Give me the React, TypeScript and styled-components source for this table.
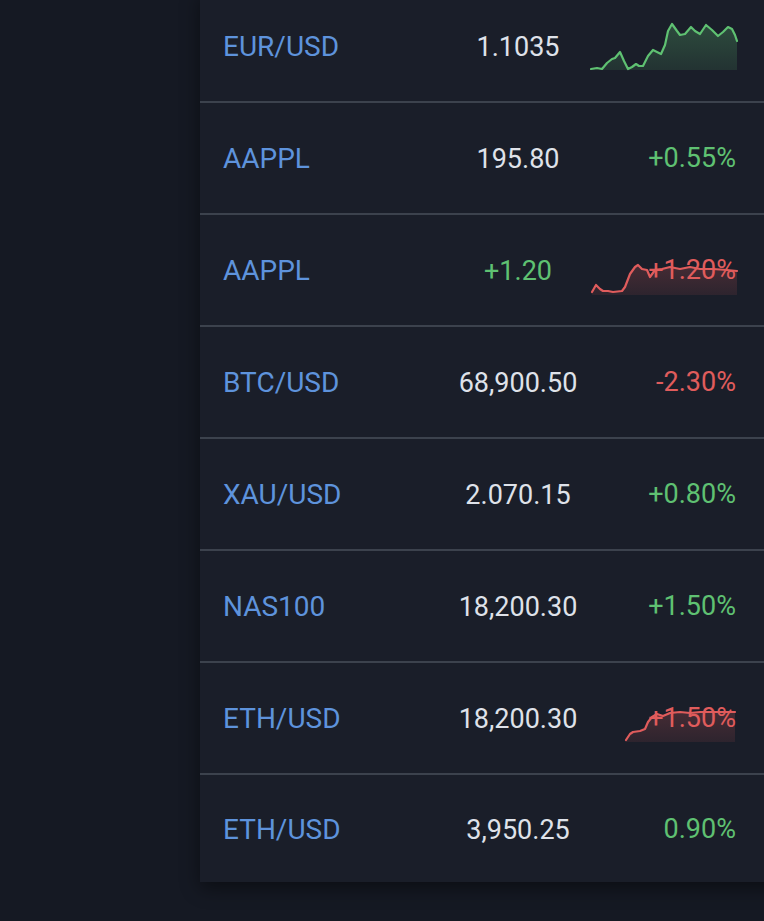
import React from "react";
import styled, { createGlobalStyle } from "styled-components";

const Global = createGlobalStyle`
  html, body { margin: 0; padding: 0; background: #151923; overflow: hidden; }
  body { font-family: Roboto, "Liberation Sans", sans-serif; }
`;

const Page = styled.div`
  width: 764px;
  height: 921px;
  overflow: hidden;
  background: #151923;
`;

const Panel = styled.div`
  margin: -9px 0 0 200px;
  width: 600px;
  background: #1a1e29;
  box-shadow: 0 6px 18px rgba(0, 0, 0, 0.45);
`;

const Row = styled.div<{ $last?: boolean }>`
  display: grid;
  grid-template-columns: 238px 160px 1fr;
  align-items: center;
  height: ${(p) => (p.$last ? 107 : 110)}px;
  border-bottom: ${(p) => (p.$last ? "none" : "2px solid #3c424d")};
  font-size: 27px;
  line-height: 34px;
`;

const Symbol = styled.div`
  padding-left: 23px;
  font-size: 28px;
  color: #5e93dc;
  transform: translateY(1px);
`;

const Price = styled.div<{ $tone?: "up" | "down" }>`
  text-align: center;
  color: ${(p) => (p.$tone === "up" ? "#5fc172" : p.$tone === "down" ? "#e05c5c" : "#dfe2e9")};
  transform: translateY(1px);
`;

const Change = styled.div<{ $tone: "up" | "down" }>`
  position: relative;
  justify-self: end;
  margin-right: 64px;
  height: 34px;
  min-width: 120px;
  text-align: right;
  color: ${(p) => (p.$tone === "up" ? "#5fc172" : "#e05c5c")};
`;

const ChangeText = styled.span`
  position: relative;
  z-index: 1;
`;

const Spark = styled.svg`
  position: absolute;
  right: -2px;
  top: -8px;
  width: 148px;
  height: 50px;
  overflow: visible;
`;

type Pt = [number, number];

const toPath = (pts: Pt[], ox: number, oy: number) =>
  pts.map((p, i) => `${i === 0 ? "M" : "L"}${p[0] - ox} ${p[1] - oy}`).join(" ");

const Sparkline: React.FC<{ pts: Pt[]; oy: number; base: number; color: string; id: string; fillOpacity: number }> = ({
  pts,
  oy,
  base,
  color,
  id,
  fillOpacity,
}) => {
  const ox = 590;
  const line = toPath(pts, ox, oy);
  const first = pts[0];
  const last = pts[pts.length - 1];
  const area = `${line} L${last[0] - ox} ${base - oy} L${first[0] - ox} ${base - oy} Z`;
  return (
    <Spark viewBox="0 0 148 50">
      <defs>
        <linearGradient id={id} x1="0" y1="0" x2="0" y2="1">
          <stop offset="0" stopColor={color} stopOpacity={fillOpacity} />
          <stop offset="1" stopColor={color} stopOpacity={fillOpacity * 0.45} />
        </linearGradient>
      </defs>
      <path d={area} fill={`url(#${id})`} />
      <path d={line} fill="none" stroke={color} strokeWidth={2.2} strokeLinejoin="round" strokeLinecap="round" />
    </Spark>
  );
};

const greenPts: Pt[] = [
  [591, 71], [597, 70], [602, 71], [607, 65], [612, 61], [615, 60], [620, 54], [624, 63], [628, 71],
  [632, 69], [636, 66], [639, 68], [643, 68], [648, 58], [653, 52], [657, 54], [661, 56], [665, 47],
  [668, 33], [672, 26], [677, 33], [680, 37], [685, 36], [691, 29], [695, 33], [700, 36], [706, 27],
  [712, 32], [718, 38], [723, 34], [728, 29], [732, 31], [735, 37], [737, 43],
];

const red1Pts: Pt[] = [
  [592, 295], [596, 288], [600, 292], [603, 294], [608, 294], [613, 295], [622, 294], [625, 290],
  [630, 277], [635, 270], [638, 268], [642, 272], [647, 273], [650, 280], [655, 273], [662, 272],
  [670, 270], [680, 272], [690, 270], [700, 272], [713, 272], [727, 273], [737, 274],
];

const red2Pts: Pt[] = [
  [626, 741], [630, 735], [633, 733], [640, 732], [645, 730], [648, 723], [652, 718], [657, 715],
  [663, 717], [670, 714], [680, 713], [690, 714], [700, 713], [713, 713], [727, 713], [735, 713],
];

type Item = {
  sym: string;
  price: string;
  priceTone?: "up" | "down";
  change: string;
  tone: "up" | "down";
  spark?: { pts: Pt[]; oy: number; base: number; color: string; fo: number };
};

const items: Item[] = [
  { sym: "EUR/USD", price: "1.1035", change: "", tone: "up", spark: { pts: greenPts, oy: 23, base: 72, color: "#5fc172", fo: 0.28 } },
  { sym: "AAPPL", price: "195.80", change: "+0.55%", tone: "up" },
  { sym: "AAPPL", price: "+1.20", priceTone: "up", change: "+1.20%", tone: "down", spark: { pts: red1Pts, oy: 248, base: 298, color: "#e05c5c", fo: 0.22 } },
  { sym: "BTC/USD", price: "68,900.50", change: "-2.30%", tone: "down" },
  { sym: "XAU/USD", price: "2.070.15", change: "+0.80%", tone: "up" },
  { sym: "NAS100", price: "18,200.30", change: "+1.50%", tone: "up" },
  { sym: "ETH/USD", price: "18,200.30", change: "+1.50%", tone: "down", spark: { pts: red2Pts, oy: 694, base: 743, color: "#e05c5c", fo: 0.22 } },
  { sym: "ETH/USD", price: "3,950.25", change: "0.90%", tone: "up" },
];

export default function App() {
  return (
    <Page>
      <Global />
      <Panel>
        {items.map((it, i) => (
          <Row key={i} $last={i === items.length - 1}>
            <Symbol>{it.sym}</Symbol>
            <Price $tone={it.priceTone}>{it.price}</Price>
            <Change $tone={it.tone}>
              {it.spark && (
                <Sparkline
                  pts={it.spark.pts}
                  oy={it.spark.oy}
                  base={it.spark.base}
                  color={it.spark.color}
                  id={`sp${i}`}
                  fillOpacity={it.spark.fo}
                />
              )}
              <ChangeText>{it.change}</ChangeText>
            </Change>
          </Row>
        ))}
      </Panel>
    </Page>
  );
}
